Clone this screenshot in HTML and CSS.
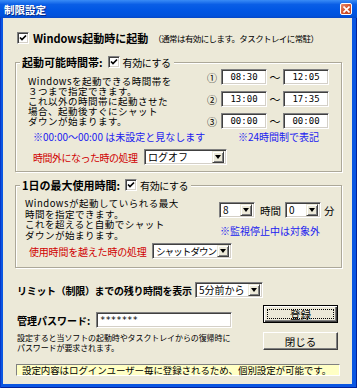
FILE: index.html
```html
<!DOCTYPE html>
<html lang="ja">
<head>
  <meta charset="UTF-8">
  <title>制限設定</title>
  <link rel="stylesheet" href="styles.css">
</head>
<body>
  <div class="window">
    <div class="titlebar">
      <span class="title">制限設定</span>
      <span class="close">
        <svg width="7" height="7" viewBox="0 0 7 7"><path d="M0.5 0.5 L6.5 6.5 M6.5 0.5 L0.5 6.5" stroke="#fff" stroke-width="1.6"/></svg>
      </span>
    </div>

    <div class="client">
      <div class="startup">
        <span class="cb"><svg width="8" height="8" viewBox="0 0 8 8"><path d="M1 3.5 L3 5.5 L7 1.5" fill="none" stroke="#000" stroke-width="1.7"/></svg></span>
        <span class="startup-label">Windows起動時に起動</span>
        <span class="startup-hint">（通常は有効にします。タスクトレイに常駐）</span>
      </div>

      <!-- 起動可能時間帯 -->
      <fieldset class="group g-time">
        <legend>
          <span class="legend-title">起動可能時間帯:</span>
          <span class="cb"><svg width="8" height="8" viewBox="0 0 8 8"><path d="M1 3.5 L3 5.5 L7 1.5" fill="none" stroke="#000" stroke-width="1.7"/></svg></span>
          <span class="legend-opt">有効にする</span>
        </legend>
        <div class="body">
          <div class="desc">
            <div>Windowsを起動できる時間帯を</div>
            <div>３つまで指定できます。</div>
            <div>これ以外の時間帯に起動させた</div>
            <div>場合、起動後すぐにシャット</div>
            <div>ダウンが始まります。</div>
          </div>
          <div class="times">
            <div class="time-row">
              <span class="num">①</span>
              <span class="field time">08:30</span>
              <span class="tilde">～</span>
              <span class="field time">12:05</span>
            </div>
            <div class="time-row">
              <span class="num">②</span>
              <span class="field time">13:00</span>
              <span class="tilde">～</span>
              <span class="field time">17:35</span>
            </div>
            <div class="time-row">
              <span class="num">③</span>
              <span class="field time">00:00</span>
              <span class="tilde">～</span>
              <span class="field time">00:00</span>
            </div>
          </div>
        </div>
        <div class="notes">
          <span class="note-left">※00:00～00:00 は未設定と見なします</span>
          <span>※24時間制で表記</span>
        </div>
        <div class="action">
          <span class="label-red">時間外になった時の処理</span>
          <span class="field combo combo-logoff"><span class="value">ログオフ</span><span class="drop"></span></span>
        </div>
      </fieldset>

      <!-- 1日の最大使用時間 -->
      <fieldset class="group g-max">
        <legend>
          <span class="legend-title">1日の最大使用時間:</span>
          <span class="cb"><svg width="8" height="8" viewBox="0 0 8 8"><path d="M1 3.5 L3 5.5 L7 1.5" fill="none" stroke="#000" stroke-width="1.7"/></svg></span>
          <span class="legend-opt">有効にする</span>
        </legend>
        <div class="body">
          <div class="desc">
            <div>Windowsが起動していられる最大</div>
            <div>時間を指定できます。</div>
            <div>これを超えると自動でシャット</div>
            <div>ダウンが始まります。</div>
          </div>
          <div class="limit">
            <div class="limit-row">
              <span class="field combo combo-num"><span class="value">8</span><span class="drop"></span></span>
              <span class="unit">時間</span>
              <span class="field combo combo-num"><span class="value">0</span><span class="drop"></span></span>
              <span class="unit unit-min">分</span>
            </div>
            <div class="note-blue">※監視停止中は対象外</div>
          </div>
        </div>
        <div class="action">
          <span class="label-red">使用時間を越えた時の処理</span>
          <span class="field combo combo-shutdown"><span class="value">シャットダウン</span><span class="drop"></span></span>
        </div>
      </fieldset>

      <div class="remain">
        <span class="remain-label">リミット（制限）までの残り時間を表示</span>
        <span class="field combo combo-remain"><span class="value">5分前から</span><span class="drop"></span></span>
      </div>

      <div class="bottom">
        <div class="pw-col">
          <div class="pw-row">
            <span class="pw-label">管理パスワード:</span>
            <span class="field pw-input">*******</span>
          </div>
          <div class="pw-note">
            <div>設定すると当ソフトの起動時やタスクトレイからの復帰時に</div>
            <div>パスワードが要求されます。</div>
          </div>
        </div>
        <div class="btn-col">
          <button class="btn btn-default"><span class="focus">登録</span></button>
          <button class="btn">閉じる</button>
        </div>
      </div>

      <div class="info">設定内容はログインユーザー毎に登録されるため、個別設定が可能です。</div>
    </div>
  </div>
</body>
</html>
```

FILE: styles.css
```css
* {
  box-sizing: border-box;
}

html, body {
  margin: 0;
  padding: 0;
}

body {
  width: 357px;
  height: 388px;
  font-family: "Noto Sans CJK JP", sans-serif;
  font-size: 10px;
  color: #000;
  background: #fff;
  overflow: hidden;
}

.window {
  width: 357px;
  height: 388px;
  display: flex;
  flex-direction: column;
  background: #0A56E2;
  box-shadow: inset 1px 0 #0838C8, inset -1px 0 #00209A, inset 0 -1px #00209A;
}

.titlebar {
  flex: none;
  height: 18px;
  display: flex;
  align-items: center;
  justify-content: space-between;
  padding: 0 5px 0 4px;
  background: linear-gradient(#3A8CF6, #0A5EE6 25%, #0055E3 60%, #0052DC 88%, #0646C6);
}

.title {
  color: #fff;
  font-weight: bold;
  font-size: 10.5px;
  text-shadow: 1px 1px #0A2A80;
}

.close {
  width: 12px;
  height: 12px;
  border: 1px solid #fff;
  border-radius: 2px;
  background: linear-gradient(135deg, #E88A6C, #D45530 50%, #C0401C);
  display: flex;
  align-items: center;
  justify-content: center;
}

.client {
  flex: 1;
  margin: 0 5px 4px 3px;
  background: #ECE9D8;
  padding: 13px 0 0 12px;
  display: flex;
  flex-direction: column;
  align-items: flex-start;
}

/* classic 3D controls */
.cb {
  flex: none;
  width: 12px;
  height: 12px;
  background: #fff;
  border: 1px solid;
  border-color: #808080 #fff #fff #808080;
  box-shadow: inset 1px 1px #404040, inset -1px -1px #D4D0C8;
  display: flex;
  align-items: center;
  justify-content: center;
}

.field {
  background: #fff;
  border: 1px solid;
  border-color: #808080 #fff #fff #808080;
  box-shadow: inset 1px 1px #404040, inset -1px -1px #D4D0C8;
  height: 16px;
}

.combo {
  display: flex;
  align-items: center;
  padding: 2px;
  font-size: 10px;
}
.combo .value {
  flex: 1;
  padding-left: 1px;
  line-height: 12px;
  white-space: nowrap;
}
.drop {
  flex: none;
  width: 12px;
  height: 12px;
  background: #ECE9D8;
  border: 1px solid;
  border-color: #ECE9D8 #404040 #404040 #ECE9D8;
  box-shadow: inset 1px 1px #fff, inset -1px -1px #808080;
  display: flex;
  align-items: center;
  justify-content: center;
}
.drop::after {
  content: "";
  width: 0;
  height: 0;
  border-left: 3.5px solid transparent;
  border-right: 3.5px solid transparent;
  border-top: 4px solid #000;
}

/* startup row */
.startup {
  display: flex;
  align-items: center;
  height: 13px;
  margin-left: 2px;
}
.startup .cb {
  margin-right: 4px;
}
.startup-label {
  font-weight: bold;
  font-size: 11px;
}
.startup-hint {
  margin-left: 5px;
  font-size: 8.5px;
  letter-spacing: -0.6px;
}

/* group boxes */
fieldset.group {
  width: 327px;
  min-width: 0;
  margin: 11px 0 0;
  padding: 0 0 6px;
  border: 1px solid #ACA899;
  box-shadow: inset 1px 1px #fff, 1px 1px #fff;
}

legend {
  display: flex;
  align-items: center;
  height: 14px;
  margin-left: 4px;
  padding: 0 3px 0 2px;
  background: #ECE9D8;
}
.legend-title {
  font-weight: bold;
  font-size: 11px;
}
legend .cb {
  margin: 0 3px 0 5px;
}
.legend-opt {
  font-size: 10px;
  letter-spacing: -0.4px;
}

.group .body {
  display: flex;
}
.desc {
  font-size: 9.5px;
  letter-spacing: 0.5px;
  white-space: nowrap;
}
.desc div {
  height: 10px;
  line-height: 10px;
}

.label-red {
  color: #D00000;
  font-size: 10px;
  letter-spacing: -0.5px;
  white-space: nowrap;
}

.action {
  display: flex;
  align-items: center;
  height: 16px;
}

/* 起動可能時間帯 */
.g-time .desc {
  margin: 7px 0 0 12px;
  width: 179px;
}
.times {
  display: flex;
  flex-direction: column;
  gap: 6px;
}
.time-row {
  display: flex;
  align-items: center;
  height: 16px;
}
.num {
  width: 14px;
  font-size: 10px;
}
.time {
  width: 46px;
  display: flex;
  align-items: center;
  justify-content: center;
  font-family: "DejaVu Sans Mono", monospace;
  font-size: 9px;
}
.tilde {
  width: 16px;
  text-align: center;
  font-size: 11px;
}
.notes {
  display: flex;
  height: 12px;
  line-height: 12px;
  margin: 2px 0 0 17px;
  font-size: 10px;
  color: #2020F0;
}
.notes .note-left {
  width: 205px;
}
.g-time .action {
  margin-top: 6px;
}
.g-time .label-red {
  margin-left: 17px;
  width: 111px;
}
.combo-logoff {
  width: 83px;
}

/* 1日の最大使用時間 */
fieldset.g-max {
  margin-top: 6px;
  padding-bottom: 8px;
}
.g-max .desc {
  margin: 6px 0 0 9px;
  width: 194px;
}
.g-max .desc div {
  height: 10.5px;
  line-height: 10.5px;
}
.limit {
  margin-top: 10px;
}
.limit-row {
  display: flex;
  align-items: center;
  height: 16px;
}
.combo-num {
  width: 36px;
}
.unit {
  margin: 0 4px 0 5px;
  font-size: 10.5px;
}
.unit.unit-min {
  margin: 0 0 0 3px;
}
.note-blue {
  margin: 7px 0 0 1px;
  height: 12px;
  line-height: 12px;
  font-size: 10px;
  color: #2020F0;
}
.g-max .action {
  margin-top: 3px;
}
.g-max .label-red {
  margin-left: 13px;
  width: 123px;
  letter-spacing: -0.2px;
}
.combo-shutdown {
  width: 80px;
}
.combo-shutdown .value {
  font-size: 9.5px;
  letter-spacing: -0.9px;
}

/* remaining time */
.remain {
  display: flex;
  align-items: center;
  height: 16px;
  margin: 14px 0 0 2px;
}
.remain-label {
  font-weight: bold;
  font-size: 10px;
  letter-spacing: -0.3px;
  width: 178px;
  white-space: nowrap;
}
.combo-remain {
  width: 68px;
}

/* password + buttons */
.bottom {
  display: flex;
  margin: 7px 0 0 2px;
}
.pw-col {
  width: 215px;
  padding-top: 7px;
}
.pw-row {
  display: flex;
  align-items: center;
  height: 16px;
}
.pw-label {
  width: 79px;
  font-weight: bold;
  font-size: 10px;
}
.pw-input {
  width: 136px;
  padding-left: 3px;
  font-family: "DejaVu Sans Mono", monospace;
  font-size: 9px;
  line-height: 14px;
}
.pw-note {
  margin-top: 5px;
  font-size: 8px;
  white-space: nowrap;
  letter-spacing: -0.1px;
}
.pw-note div {
  height: 10px;
  line-height: 10px;
}
.btn-col {
  margin-left: 31px;
  display: flex;
  flex-direction: column;
  gap: 9px;
}
.btn {
  width: 75px;
  height: 18px;
  padding: 0;
  margin: 0;
  background: #ECE9D8;
  border: 1px solid;
  border-color: #fff #404040 #404040 #fff;
  box-shadow: inset -1px -1px #808080;
  font-family: "Noto Sans CJK JP", sans-serif;
  font-size: 10.5px;
  color: #000;
  display: flex;
  align-items: center;
  justify-content: center;
}
.btn-default {
  border-color: #000;
  box-shadow: inset 1px 1px #fff, inset -1px -1px #404040, inset -2px -2px #808080;
  padding: 3px;
}
.btn-default .focus {
  width: 100%;
  height: 100%;
  border: 1px dotted #000;
  display: flex;
  align-items: center;
  justify-content: center;
}

/* info bar */
.info {
  margin: 11px 0 0 1px;
  width: 324px;
  height: 12px;
  padding-left: 5px;
  background: #FFFFC4;
  border: 1px solid;
  border-color: #808080 #fff #fff #808080;
  font-size: 9.5px;
  line-height: 10px;
  letter-spacing: -0.1px;
  white-space: nowrap;
}
```
